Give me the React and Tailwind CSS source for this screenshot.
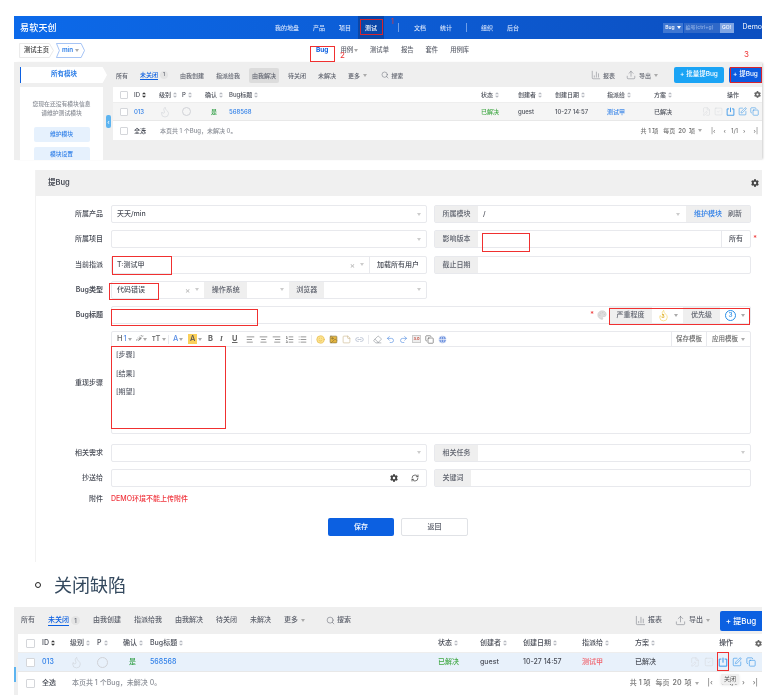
import React from 'react';
import {
  AlignCenter, AlignLeft, AlignRight, BarChart3, Copy, Eraser, FilePen, Flame, Globe, Image, Link2,
  List, ListOrdered, Palette, Redo2, RefreshCw, Search, Smile, SquareCheck, SquarePen, StickyNote, Undo2, Upload,
} from 'lucide-react';
import { FaCog } from 'react-icons/fa';

const Caret = ({ className = 'border-t-[#aaa]' }) => (
  <span className={`inline-block w-0 h-0 border-x-[2px] border-x-transparent border-t-[3px] ${className}`} />
);

const Sort = ({ dark }) => (
  <svg viewBox="0 0 6 8" className="w-[4px] h-[6px] ml-[2px] shrink-0">
    <path d="M3 0 6 3H0z" fill={dark ? '#333' : '#b5b8bf'} />
    <path d="M3 8 0 5h6z" fill={dark ? '#333' : '#b5b8bf'} />
  </svg>
);

const PowerBox = ({ className }) => (
  <svg viewBox="0 0 12 12" fill="none" stroke="currentColor" strokeWidth="1.1" className={className}>
    <path d="M4 2.5H1.5v8.5h9V2.5H8M6 .8v6" />
  </svg>
);

// breadcrumb outline, first one has a flat tail and the second a notched one
const Crumb = ({ points, stroke, className, children }) => (
  <span className={`relative h-[15px] flex items-center justify-center ${className}`}>
    <svg viewBox="0 0 30 15" preserveAspectRatio="none" className="absolute inset-0 w-full h-full">
      <polygon points={points} fill="white" stroke={stroke} strokeWidth="0.8" />
    </svg>
    <span className="relative flex items-center gap-[2px]">{children}</span>
  </span>
);

const tabs = ['由我创建', '指派给我', '由我解决', '待关闭', '未解决'];

const TabBar = ({ big, activeTab }) => (
  <div className={`flex items-center text-[#5e626d] ${big ? 'text-[7px] gap-[13px]' : 'text-[6px] gap-[12px]'}`}>
    <span>所有</span>
    <span className="flex items-center gap-[2px]">
      <span className="text-[#0c60e1] border-b border-[#0c60e1] font-medium">未关闭</span>
      <span className={`rounded-full bg-[#e4e4e4] flex items-center justify-center ${big ? 'w-[9px] h-[9px] text-[6px]' : 'w-[8px] h-[8px] text-[5px]'}`}>1</span>
    </span>
    {tabs.map((t) =>
      t === activeTab ? (
        <span key={t} className="bg-[#dcdcdc] rounded-[2px] px-[3px] py-[3px] -mx-[3px]">{t}</span>
      ) : (
        <span key={t}>{t}</span>
      )
    )}
    <span className="flex items-center gap-[3px]">更多 <Caret /></span>
    <span className={`flex items-center gap-[2px] ${big ? 'ml-[8px]' : 'ml-[2px]'}`}>
      <Search className={big ? 'w-[9px] h-[9px]' : 'w-[8px] h-[8px]'} strokeWidth={1.4} />
      搜索
    </span>
  </div>
);

const Head = ({ children, dark, className = '' }) => (
  <span className={`flex items-center font-medium text-[#4a4e58] ${className}`}>
    {children}
    <Sort dark={dark} />
  </span>
);

const Box = ({ big }) => (
  <span className={`block bg-white border border-[#d4d6da] rounded-[1px] ${big ? 'w-[9px] h-[9px]' : 'w-[8px] h-[8px]'}`} />
);

const BugTable = ({ big, assignedClass, rowClass }) => {
  const grid = big
    ? 'grid-cols-[16px_28px_27px_26px_27px_288px_42px_43px_59px_53px_55px_72px] pl-[8px]'
    : 'grid-cols-[14px_25px_23px_23px_24px_252px_37px_37px_52px_47px_46px_62px] pl-[7px]';
  const icon = big ? 'w-[10px] h-[10px]' : 'w-[9px] h-[9px]';
  return (
    <div className={`bg-white ${big ? 'text-[7px]' : 'text-[6px]'} text-[#4a4e58]`}>
      <div className={`grid items-center border-b border-[#eee] ${grid} ${big ? 'h-[19px]' : 'h-[16px]'}`}>
        <Box big={big} />
        <Head dark>ID</Head>
        <Head>级别</Head>
        <Head>P</Head>
        <Head>确认</Head>
        <Head>Bug标题</Head>
        <Head>状态</Head>
        <Head>创建者</Head>
        <Head>创建日期</Head>
        <Head>指派给</Head>
        <Head>方案</Head>
        <span className="flex items-center font-medium whitespace-nowrap">
          <span className={big ? 'ml-[29px]' : 'ml-[27px]'}>操作</span>
          <FaCog className={`text-[#666] w-[7px] h-[7px] shrink-0 ${big ? 'ml-[22px]' : 'ml-[15px]'}`} />
        </span>
      </div>
      <div className={`grid items-center border-b border-[#e8e8e8] ${grid} ${rowClass} ${big ? 'h-[19px]' : 'h-[18px]'}`}>
        <Box big={big} />
        <span className="text-[#2e7fe8]">013</span>
        <Flame className={`${big ? 'w-[13px] h-[13px]' : 'w-[12px] h-[12px]'} text-[#c9ccd2]`} strokeWidth={1} />
        <span className={`${big ? 'w-[11px] h-[11px]' : 'w-[9px] h-[9px]'} rounded-full border border-[#d0d2d7]`} />
        <span className="text-[#2f9e44] pl-[6px]">是</span>
        <span className="text-[#2e7fe8]">568568</span>
        <span className="text-[#43a947]">已解决</span>
        <span>guest</span>
        <span>10-27 14:57</span>
        <span className={assignedClass}>测试甲</span>
        <span>已解决</span>
        <span className={`flex items-center ${big ? 'gap-[4px]' : 'gap-[3px] pl-[2px]'}`}>
          <FilePen className={`${icon} text-[#d5d7db]`} strokeWidth={1.2} />
          <SquareCheck className={`${icon} text-[#d5d7db]`} strokeWidth={1.2} />
          <PowerBox className={`${icon} text-[#2a8fe8]`} />
          <SquarePen className={`${icon} text-[#2a8fe8]`} strokeWidth={1.4} />
          <Copy className={`${icon} text-[#2a8fe8]`} strokeWidth={1.4} />
        </span>
      </div>
      <div className={`flex items-center justify-between ${big ? 'h-[23px] pl-[8px] pr-[4px]' : 'h-[19px] pl-[7px] pr-[4px]'}`}>
        <span className="flex items-center">
          <span className={big ? 'w-[16px]' : 'w-[14px]'}><Box big={big} /></span>
          <span>全选</span>
          <span className={`text-[#8a8e96] ${big ? 'ml-[16px]' : 'ml-[14px]'}`}>本页共 1 个Bug，未解决 0。</span>
        </span>
        <span className="flex items-center gap-[5px] text-[#777]">
          <span>共 <b className="font-semibold">1</b> 项</span>
          <span className="flex items-center gap-[3px]">每页 <b className="font-semibold">20</b> 项 <Caret /></span>
          <span className="ml-[4px]">|‹</span>
          <span className="ml-[3px]">‹</span>
          <span>1/1</span>
          <span>›</span>
          <span className="ml-[3px]">›|</span>
        </span>
      </div>
    </div>
  );
};

const Report = ({ big }) => (
  <span className={`flex items-center text-[#5e626d] ${big ? 'text-[7px] gap-[13px]' : 'text-[6px] gap-[11px]'}`}>
    <span className="flex items-center gap-[2px]">
      <BarChart3 className={big ? 'w-[11px] h-[11px]' : 'w-[10px] h-[10px]'} strokeWidth={1} />
      报表
    </span>
    <span className="flex items-center gap-[3px]">
      <Upload className={big ? 'w-[11px] h-[11px]' : 'w-[10px] h-[10px]'} strokeWidth={1} />
      导出 <Caret />
    </span>
  </span>
);

const TopSection = () => (
  <div className="ml-[14px] w-[748px] h-[144px] flex flex-col font-medium">
    <div className="h-[23px] shrink-0 bg-gradient-to-r from-[#0c6aea] to-[#0c4fc0] flex items-center text-white text-[6px]">
      <span className="w-[261px] pl-[6px] text-[9px] tracking-[0.2px]">易软天创</span>
      <div className="flex items-center gap-[14px] text-[#d7e4fb]">
        <span>我的地盘</span>
        <span>产品</span>
        <span>项目</span>
        <span className="text-white bg-[#0a47a8] -mx-[7px] px-[7px] h-[23px] flex items-center">测试</span>
        <span className="w-px h-[9px] bg-[#6d9eea] ml-[7px]" />
        <span className="ml-[1px]">文档</span>
        <span>统计</span>
        <span className="w-px h-[9px] bg-[#6d9eea]" />
        <span>组织</span>
        <span>后台</span>
      </div>
      <div className="ml-auto flex items-center h-[10px] text-[5px] mr-[9px]">
        <span className="bg-[#3f77d2] h-full flex items-center gap-[2px] px-[2px]">Bug <Caret className="border-t-white" /></span>
        <span className="bg-[#2f68c8] h-full w-[36px] flex items-center px-[2px] ml-px text-[#8fb0e6]">编号(ctrl+g)</span>
        <span className="bg-[#7fa5e3] h-full w-[14px] flex items-center justify-center">GO!</span>
      </div>
      <span className="text-[7px] font-normal">Demo</span>
    </div>

    <div className="h-[23px] shrink-0 bg-white flex items-center text-[6.3px] text-[#5e626d] relative">
      <Crumb className="ml-[5px] w-[35px] text-[#333]" points="0.5,0.5 26,0.5 29.5,7.5 26,14.5 0.5,14.5" stroke="#e6e6e6">
        测试主页
      </Crumb>
      <Crumb className="ml-[2px] w-[29px] text-[#2e7fe8] font-semibold" points="0.5,0.5 26,0.5 29.5,7.5 26,14.5 0.5,14.5 3.5,7.5" stroke="#8db4f2">
        min <Caret />
      </Crumb>
      <div className="ml-[231px] flex items-center gap-[12px]">
        <span className="text-[#0c60e1] font-bold text-[6.5px]">Bug</span>
        <span className="flex items-center gap-px">用例<Caret /></span>
        <span>测试单</span>
        <span>报告</span>
        <span>套件</span>
        <span>用例库</span>
      </div>
    </div>

    <div className="flex-1 bg-[#efefef] flex shadow-[2px_0_2px_-1px_rgba(0,0,0,0.2)] relative overflow-hidden">
      <div className="w-[99px] shrink-0 pl-[6px] pt-[5px]">
        <div className="w-[87px] h-[16px] bg-white border-l-[1.5px] border-[#0c60e1] flex items-center justify-center text-[6.5px] text-[#2e7fe8] font-semibold [clip-path:polygon(0_0,95%_0,100%_50%,95%_100%,0_100%)]">
          所有模块
        </div>
        <div className="w-[83px] h-[73px] mt-[4px] bg-white pt-[13px] flex flex-col items-center text-[5.8px] text-[#8a8e96] leading-[8.5px]">
          <span>您现在还没有模块信息</span>
          <span>请维护测试模块</span>
          <span className="mt-[10px] w-[56px] h-[15px] bg-[#e6f1fd] rounded-[2px] flex items-center justify-center text-[#2e7fe8] shrink-0">维护模块</span>
          <span className="mt-[5px] w-[56px] h-[15px] bg-[#e6f1fd] rounded-[2px] flex items-center justify-center text-[#2e7fe8] shrink-0">模块设置</span>
        </div>
      </div>
      <div className="flex-1 pt-[5px]">
        <div className="h-[16px] flex items-center pl-[3px]">
          <TabBar activeTab="由我解决" />
          <span className="ml-auto flex items-center gap-[16px]">
            <Report />
          </span>
          <span className="ml-[16px] w-[50px] h-[16px] bg-[#1ba4f5] rounded-[2px] text-white text-[6.5px] flex items-center justify-center">+ 批量提Bug</span>
          <span className="ml-[5px] w-[33px] h-[16px] bg-[#0c5ce0] rounded-[2px] text-white text-[6.5px] flex items-center justify-center">+ 提Bug</span>
        </div>
        <div className="mt-[4px]">
          <BugTable assignedClass="text-[#2e7fe8]" rowClass="bg-[#f5f5f5]" />
        </div>
      </div>
      <span className="absolute left-[92px] top-[53px] w-[5px] h-[13px] bg-[#5db4f0] rounded-[2px] text-white text-[6px] leading-[13px] text-center">‹</span>
    </div>
  </div>
);

const Shell = ({ className = '', children }) => (
  <div className={`flex items-center h-[18px] bg-white border border-[#e8e9ed] rounded-[2px] text-[7px] text-[#4a4e58] ${className}`}>
    {children}
  </div>
);

const Addon = ({ className = '', children }) => (
  <span className={`h-full flex items-center justify-center bg-[#efefef] text-[#5e626d] shrink-0 ${className}`}>{children}</span>
);

const Row = ({ label, bold, children }) => (
  <div className="flex items-center text-[7px] leading-[10px]">
    <span className={`w-[67px] shrink-0 text-right text-[#4a4e58] ${bold ? 'font-semibold' : 'font-medium'}`}>{label}</span>
    <div className="ml-[8px] flex-1 min-w-0">{children}</div>
  </div>
);

const Pair = ({ left, right }) => (
  <div className="flex gap-[7px] w-[640px]">
    <div className="w-[316px] shrink-0">{left}</div>
    <div className="w-[317px] shrink-0">{right}</div>
  </div>
);

const SelectBox = ({ text, className = '' }) => (
  <Shell className={`px-[5px] justify-between ${className}`}>
    <span>{text}</span>
    <Caret className="border-t-[#ccc]" />
  </Shell>
);

const ToolIcon = ({ Icon, className = 'text-[#555]' }) => <Icon className={`w-[9px] h-[9px] shrink-0 ${className}`} strokeWidth={1.6} />;

const EditorToolbar = () => (
  <div className="h-[15px] border-b border-[#e8e9ed] flex items-center text-[7.5px] text-[#666] pl-[5px]">
    <span className="flex items-center gap-px w-[19px]">H<span className="text-[#5b8fe6]">1</span><Caret /></span>
    <span className="flex items-center gap-px w-[16px] italic font-serif">ℱ<Caret /></span>
    <span className="flex items-center gap-px w-[16px]">тT<Caret /></span>
    <span className="w-px h-[9px] bg-[#e8e9ed] mr-[4px]" />
    <span className="flex items-center gap-px w-[15px] text-[#5b8fe6]">A<Caret /></span>
    <span className="flex items-center gap-px w-[20px]"><span className="bg-[#fbd05a] px-[2px] text-[#555]">A</span><Caret /></span>
    <span className="w-[12px] font-bold">B</span>
    <span className="w-[12px] italic font-bold font-serif">I</span>
    <span className="w-[14px] underline font-bold">U</span>
    <div className="flex items-center gap-[4px]">
      <ToolIcon Icon={AlignLeft} />
      <ToolIcon Icon={AlignCenter} />
      <ToolIcon Icon={AlignRight} />
      <ToolIcon Icon={ListOrdered} />
      <ToolIcon Icon={List} />
      <span className="w-px h-[9px] bg-[#e8e9ed]" />
      <ToolIcon Icon={Smile} className="text-[#e6b640] fill-[#fbe28f]" />
      <ToolIcon Icon={Image} className="text-[#7a6a35] fill-[#e6b640]" />
      <ToolIcon Icon={StickyNote} className="text-[#c9b58a]" />
      <ToolIcon Icon={Link2} className="text-[#9aa6bd]" />
      <span className="w-px h-[9px] bg-[#e8e9ed]" />
      <ToolIcon Icon={Eraser} className="text-[#8a8e96]" />
      <ToolIcon Icon={Undo2} className="text-[#4d8ae0]" />
      <ToolIcon Icon={Redo2} className="text-[#4d8ae0]" />
      <span className="w-[9px] h-[8px] bg-[#eee] border border-[#ccc] text-[4px] leading-[6px] text-center text-[#c0392b]">3.0</span>
      <ToolIcon Icon={Copy} className="text-[#555]" />
      <ToolIcon Icon={Globe} className="text-white fill-[#6f93df]" />
    </div>
    <span className="ml-auto h-full w-[35px] flex items-center justify-center border-l border-[#e8e9ed] text-[6.5px]">保存模板</span>
    <span className="h-full w-[44px] flex items-center justify-center gap-[3px] border-l border-[#e8e9ed] text-[6.5px]">应用模板 <Caret /></span>
  </div>
);

const FormSection = () => (
  <div className="ml-[35px] mt-[10px] w-[727px] h-[392px] border-l border-[#f2f2f2] font-medium">
    <div className="h-[26px] bg-[#f0f0f0] flex items-center justify-between pl-[12px] pr-[3px] text-[7.5px] font-semibold text-[#4a4e58]">
      提Bug
      <FaCog className="w-[8px] h-[8px] text-[#444]" />
    </div>
    <div className="pt-[9px] flex flex-col gap-[7.25px]">
      <Row label="所属产品">
        <Pair
          left={<SelectBox text="天天/min" />}
          right={
            <Shell>
              <Addon className="w-[43px]">所属模块</Addon>
              <span className="pl-[5px] flex-1">/</span>
              <Caret className="border-t-[#ccc]" />
              <Addon className="w-[64px] ml-[6px] gap-[6px]"><span className="text-[#2e7fe8]">维护模块</span><span>刷新</span></Addon>
            </Shell>
          }
        />
      </Row>
      <Row label="所属项目">
        <Pair
          left={<SelectBox text="" />}
          right={
            <div className="relative">
              <Shell>
                <Addon className="w-[43px]">影响版本</Addon>
                <span className="flex-1" />
                <span className="w-[29px] h-full flex items-center justify-center border-l border-[#e8e9ed]">所有</span>
              </Shell>
              <span className="absolute -right-[6px] top-[4px] text-[#e33] text-[7px]">*</span>
            </div>
          }
        />
      </Row>
      <Row label="当前指派">
        <Pair
          left={
            <Shell className="pl-[5px]">
              <span className="flex-1">T:测试甲</span>
              <span className="text-[#bbb] text-[8px] mr-[5px]">×</span>
              <Caret className="border-t-[#ccc]" />
              <span className="ml-[5px] w-[57px] h-full flex items-center justify-center border-l border-[#e8e9ed]">加载所有用户</span>
            </Shell>
          }
          right={
            <Shell>
              <Addon className="w-[43px]">截止日期</Addon>
            </Shell>
          }
        />
      </Row>
      <Row label="Bug类型" bold>
        <div className="w-[316px]">
          <Shell className="pl-[5px]">
            <span className="w-[68px]">代码错误</span>
            <span className="text-[#bbb] text-[8px] mr-[5px]">×</span>
            <Caret className="border-t-[#ccc]" />
            <Addon className="w-[43px] ml-[5px]">操作系统</Addon>
            <span className="w-[42px] h-full flex items-center justify-end pr-[5px]"><Caret className="border-t-[#ccc]" /></span>
            <Addon className="w-[35px]">浏览器</Addon>
            <span className="flex-1 h-full flex items-center justify-end pr-[5px]"><Caret className="border-t-[#ccc]" /></span>
          </Shell>
        </div>
      </Row>
      <Row label="Bug标题" bold>
        <Shell className="w-[640px] justify-end">
          <span className="text-[#e33] text-[7px] mr-[3px]">*</span>
          <Palette className="w-[10px] h-[10px] text-[#ccc] fill-[#ddd] mr-[1px]" strokeWidth={1.5} />
          <Addon className="w-[43px] ml-[1px]">严重程度</Addon>
          <span className="w-[31px] h-full flex items-center justify-center gap-[5px]">
            <span className="relative w-[11px] h-[11px] flex items-center justify-center">
              <Flame className="absolute w-[13px] h-[13px] text-[#f5d45e]" strokeWidth={1.2} />
              <span className="relative text-[5px] text-[#d9a81e] mt-[2px]">3</span>
            </span>
            <Caret />
          </span>
          <Addon className="w-[37px]">优先级</Addon>
          <span className="w-[30px] h-full flex items-center justify-center gap-[5px]">
            <span className="w-[11px] h-[11px] rounded-full border border-[#2a8fe8] text-[#2a8fe8] text-[6.5px] flex items-center justify-center">3</span>
            <Caret />
          </span>
        </Shell>
      </Row>
      <Row label="重现步骤">
        <div className="w-[640px] h-[103px] border border-[#e8e9ed] rounded-[2px]">
          <EditorToolbar />
          <div className="pl-[4px] pt-[3px] text-[7px] text-[#5e626d] leading-[9px] flex flex-col gap-[9.6px]">
            <p>[步骤]</p>
            <p>[结果]</p>
            <p>[期望]</p>
          </div>
        </div>
      </Row>
      <div className="mt-[2px] flex flex-col gap-[7.25px]">
        <Row label="相关需求">
          <Pair
            left={<SelectBox text="" />}
            right={
              <Shell className="pr-[5px]">
                <Addon className="w-[43px]">相关任务</Addon>
                <span className="flex-1" />
                <Caret className="border-t-[#ccc]" />
              </Shell>
            }
          />
        </Row>
        <Row label="抄送给">
          <Pair
            left={
              <Shell className="justify-end gap-[13px] pr-[7px]">
                <FaCog className="w-[8px] h-[8px] text-[#444]" />
                <RefreshCw className="w-[8px] h-[8px] text-[#444]" strokeWidth={2.2} />
              </Shell>
            }
            right={
              <Shell>
                <Addon className="w-[36px]">关键词</Addon>
              </Shell>
            }
          />
        </Row>
      </div>
      <Row label="附件">
        <span className="text-[#f0343c]">DEMO环境不能上传附件</span>
      </Row>
      <div className="mt-[7px] ml-[292px] flex gap-[7px] text-[7px]">
        <span className="w-[66px] h-[18px] rounded-[2px] bg-[#0c60e1] text-white flex items-center justify-center">保存</span>
        <span className="w-[67px] h-[18px] rounded-[2px] border border-[#e0e2e6] text-[#5e626d] flex items-center justify-center">返回</span>
      </div>
    </div>
  </div>
);

const CloseSection = () => (
  <div className="ml-[14px] w-[748px] h-[88px] bg-[#efefef] relative font-medium">
    <div className="h-[27px] flex items-center pl-[7px]">
      <TabBar big />
      <span className="ml-auto"><Report big /></span>
      <span className="ml-[10px] w-[42px] h-[20px] bg-[#0c60e1] rounded-l-[2px] text-white text-[8px] flex items-center justify-center">+ 提Bug</span>
    </div>
    <div className="ml-[4px]">
      <BugTable big assignedClass="text-[#f0606a]" rowClass="bg-[#e8f1fb]" />
    </div>
    <span className="absolute left-0 top-[60px] w-[2px] h-[15px] bg-[#5db4f0]" />
  </div>
);

export default function App() {
  return (
    <div className="relative w-[771px] h-[697px] overflow-hidden bg-white pt-[16px] font-['Inter','Noto_Sans_CJK_SC',sans-serif] blur-[0.3px]">
      <TopSection />
      <FormSection />
      <div className="h-[45px] flex items-center pl-[35px] text-[18px] text-[#34495e] font-['Noto_Sans_CJK_SC',sans-serif]">
        <span className="w-[6px] h-[6px] rounded-full border border-[#222] mr-[13px]" />
        关闭缺陷
      </div>
      <CloseSection />

      {/* red annotations drawn over the screenshots */}
      <div className="absolute left-[360px] top-[19px] w-[23px] h-[16px] border border-[#d8242e]" />
      <span className="absolute left-[391px] top-[17px] text-[7px] text-[#e33]">1</span>
      <div className="absolute left-[310px] top-[46px] w-[25px] h-[16px] border border-[#f03030]" />
      <span className="absolute left-[340px] top-[49px] text-[8px] text-[#e33]">2</span>
      <span className="absolute left-[744px] top-[48px] text-[8px] text-[#e33]">3</span>
      <div className="absolute left-[730px] top-[67px] w-[32px] h-[16px] border border-[#d8242e]" />
      <div className="absolute left-[112px] top-[256px] w-[60px] h-[19px] border border-[#f03030]" />
      <div className="absolute left-[482px] top-[233px] w-[48px] h-[19px] border border-[#f03030]" />
      <div className="absolute left-[109px] top-[283px] w-[50px] h-[17px] border border-[#f03030]" />
      <div className="absolute left-[111px] top-[309px] w-[147px] h-[17px] border border-[#f03030]" />
      <div className="absolute left-[609px] top-[308px] w-[141px] h-[17px] border border-[#f03030]" />
      <div className="absolute left-[111px] top-[346px] w-[115px] h-[83px] border border-[#f03030]" />
      <div className="absolute left-[717px] top-[652px] w-[12px] h-[19px] border border-[#f03030]" />
      <span className="absolute left-[721px] top-[674px] w-[18px] h-[10px] bg-[#f0f0f0] rounded-[1px] text-[6px] leading-[10px] text-center text-[#555] shadow-sm">关闭</span>
    </div>
  );
}
